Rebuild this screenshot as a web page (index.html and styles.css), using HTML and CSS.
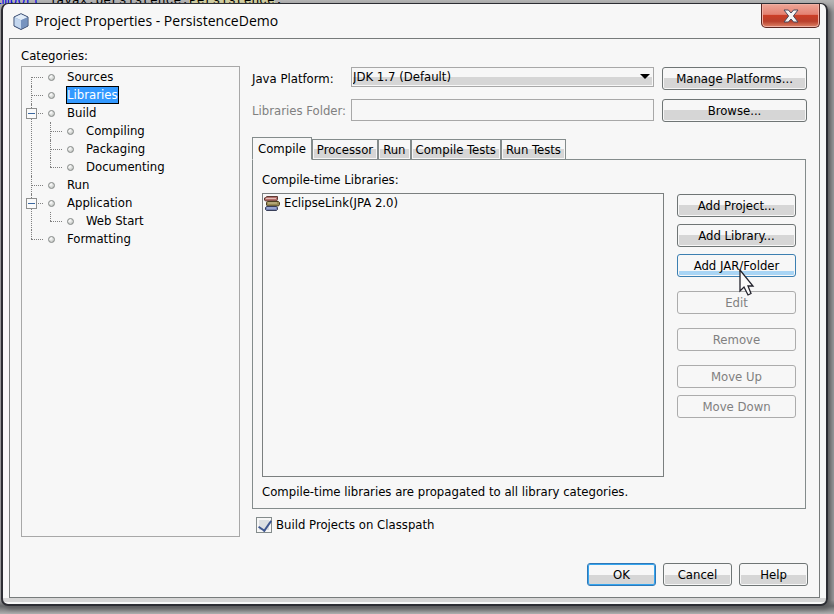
FILE: index.html
```
<!DOCTYPE html>
<html lang="en">
<head>
  <meta charset="UTF-8">
  <title>Project Properties - PersistenceDemo</title>
  <link rel="stylesheet" href="styles.css">
</head>
<body>
  <div class="editor-line"><span class="keyword">import</span> javax.persistence.<mark>Persistence</mark>;</div>

  <div class="window">
    <header class="titlebar">
      <svg class="app-icon" width="16" height="17" viewBox="0 0 16 17">
        <path d="M8 .7 15 4v9l-7 3.5L1 13V4z" fill="#8fa9cd" stroke="#34466b"/>
        <path d="M8 1.3 14.3 4.3 8 7.2 1.7 4.3z" fill="#e3edf8"/>
        <path d="M8 7.2 14.4 4.4v8.3L8 15.8z" fill="#7793bf"/>
        <path d="M1.6 4.5 8 7.3v8.5l-6.4-3.2z" fill="#c3d6ee"/>
      </svg>
      <h1>Project Properties - PersistenceDemo</h1>
      <button class="close" aria-label="Close">
        <svg width="16" height="14" viewBox="0 0 16 14">
          <path d="M1 1h4.4L8 4l2.6-3H15l-4.6 6 4.6 6h-4.4L8 10l-2.6 3H1l4.6-6z" fill="#f4f4f4" stroke="#4b4a5c"/>
        </svg>
      </button>
    </header>

    <main class="content">
      <div class="columns">
        <section class="categories">
          <h2>Categories:</h2>
          <div class="tree">
            <ul>
              <li><div class="node"><i class="bullet"></i><span>Sources</span></div></li>
              <li><div class="node selected"><i class="bullet"></i><span>Libraries</span></div></li>
              <li>
                <div class="node"><button class="toggle" aria-label="Collapse Build"></button><i class="bullet"></i><span>Build</span></div>
                <ul>
                  <li><div class="node"><i class="bullet"></i><span>Compiling</span></div></li>
                  <li><div class="node"><i class="bullet"></i><span>Packaging</span></div></li>
                  <li><div class="node"><i class="bullet"></i><span>Documenting</span></div></li>
                </ul>
              </li>
              <li><div class="node"><i class="bullet"></i><span>Run</span></div></li>
              <li>
                <div class="node"><button class="toggle" aria-label="Collapse Application"></button><i class="bullet"></i><span>Application</span></div>
                <ul>
                  <li><div class="node"><i class="bullet"></i><span>Web Start</span></div></li>
                </ul>
              </li>
              <li><div class="node"><i class="bullet"></i><span>Formatting</span></div></li>
            </ul>
          </div>
        </section>

        <section class="settings">
          <div class="form">
            <label for="platform">Java Platform:</label>
            <div class="select">
              <select id="platform"><option>JDK 1.7 (Default)</option></select>
              <svg width="10" height="5" viewBox="0 0 10 5"><path d="M0 0h10L5 5z"/></svg>
            </div>
            <button class="btn">Manage Platforms...</button>
            <label for="folder" class="muted">Libraries Folder:</label>
            <input id="folder" type="text" disabled>
            <button class="btn">Browse...</button>
          </div>

          <div class="tabs" role="tablist">
            <button class="tab active" role="tab" aria-selected="true">Compile</button>
            <button class="tab" role="tab">Processor</button>
            <button class="tab" role="tab">Run</button>
            <button class="tab" role="tab">Compile Tests</button>
            <button class="tab" role="tab">Run Tests</button>
          </div>

          <div class="tab-panel" role="tabpanel">
            <h2>Compile-time Libraries:</h2>
            <div class="libraries">
              <ul class="list">
                <li>
                  <svg width="16" height="15" viewBox="0 0 16 15">
                    <path d="M1.500 1.500 3 .5h10.500v3l-1 1.500h-11L.5 4V2z" fill="#b5706c" stroke="#5e3a34"/>
                    <path d="M2 2.500h10" stroke="#e2bdb6"/>
                    <path d="M3.500 5.500h11l1 1v2l-1 1.500h-11l-1-1V6.500z" fill="#978a56" stroke="#4d4022"/>
                    <path d="M4 7h9" stroke="#cfc496"/>
                    <path d="M2.500 10.500h10l1 1v2l-1 1h-10l-1-1v-2z" fill="#7482b4" stroke="#383e58"/>
                    <path d="M3 12h9" stroke="#bcc6ea"/>
                  </svg>
                  EclipseLink(JPA 2.0)
                </li>
              </ul>
              <div class="actions">
                <button class="btn">Add Project...</button>
                <button class="btn">Add Library...</button>
                <button class="btn hover">Add JAR/Folder
                  <svg class="cursor" width="16" height="28" viewBox="0 0 16 28">
                    <path d="M1 1v21l4-4 4 8 3-1.500-3-7.500h5z" fill="#fafafa" stroke="#22222c" stroke-width="1.300"/>
                  </svg>
                </button>
                <button class="btn spaced" disabled>Edit</button>
                <button class="btn spaced" disabled>Remove</button>
                <button class="btn spaced" disabled>Move Up</button>
                <button class="btn" disabled>Move Down</button>
              </div>
            </div>
            <p>Compile-time libraries are propagated to all library categories.</p>
          </div>

          <label class="check"><input type="checkbox" checked>Build Projects on Classpath</label>
        </section>
      </div>

      <footer class="buttons">
        <button class="btn default">OK</button>
        <button class="btn">Cancel</button>
        <button class="btn">Help</button>
      </footer>
    </main>
  </div>
</body>
</html>
```
FILE: styles.css
```
* { box-sizing: border-box; }
body {
  margin: 0;
  padding: 3px 6px 8px 1px;
  min-height: 100vh;
  display: flex;
  flex-direction: column;
  position: relative;
  background: linear-gradient(to bottom, #b4b4b4, #9a9a9c 12px, #9a9a9c 600px, #66686a 606px, #b0b0b0);
  color: #000;
  font: 13px/16px "DejaVu Sans Condensed", "DejaVu Sans", sans-serif;
  font-stretch: condensed;
}
h1, h2, p, ul { margin: 0; padding: 0; font-size: inherit; font-weight: normal; list-style: none; }
button, input, select { font: inherit; color: inherit; }

/* code showing above the dialog */
.editor-line {
  position: absolute;
  top: -7px;
  left: -6px;
  font: 13px/15px "Liberation Mono", monospace;
  white-space: pre;
}
.keyword { color: #0000e6; }
.editor-line mark { background: #d0cda0; }

.window {
  position: relative;
  flex: 1;
  display: flex;
  flex-direction: column;
  padding: 0 6px 6px;
  border: 2px solid #2c2d33;
  border-top-width: 1px;
  border-radius: 7px;
  background: linear-gradient(to top, #f7f7f7 2px, #d6d6d6 2px, #d6d6d6 6px, #f7f7f7 6px);
  box-shadow: 3px 3px 4px #5c5c5e;
}

.titlebar { display: flex; align-items: center; height: 34px; padding-left: 4px; }
.titlebar h1 { flex: 1; margin-left: 6px; font: 14px/20px "Open Sans", sans-serif; }
.close {
  align-self: flex-start;
  display: flex;
  align-items: center;
  justify-content: center;
  width: 59px;
  height: 24px;
  padding: 0;
  border: 1px solid #5b2823;
  border-top: 0;
  border-radius: 0 0 5px 5px;
  background: linear-gradient(#eea698, #e48272 45%, #cb3e26 50%, #b9402c 75%, #de8468);
  box-shadow: inset 0 0 0 1px #f0b0a4;
}

.content {
  flex: 1;
  display: flex;
  flex-direction: column;
  gap: 26px;
  padding: 9px 11px 11px;
  border: 1px solid #777b7b;
  background: #f7f7f7;
}
.columns { flex: 1; display: grid; grid-template-columns: 219px 1fr; gap: 12px; }
.categories { display: flex; flex-direction: column; gap: 2px; }
.tree { flex: 1; padding-top: 1px; border: 1px solid #a8a8a8; }

.tree li { position: relative; }
.tree ul ul { margin-left: 19px; }
.tree li::before {
  content: "";
  position: absolute;
  left: 9px;
  top: 0;
  bottom: 0;
  border-left: 1px dotted #808080;
}
.tree > ul > li:first-child::before { top: 9px; }
.tree li:last-child::before { bottom: auto; height: 9px; }
.node { position: relative; display: flex; align-items: center; height: 18px; padding-left: 26px; }
.node::before {
  content: "";
  position: absolute;
  left: 9px;
  top: 9px;
  width: 12px;
  border-top: 1px dotted #808080;
}
.node span { margin-left: 11px; border: 1px solid transparent; line-height: 16px; }
.selected span { border-color: #000; background: #3399ff; color: #fff; }
.bullet {
  width: 7px;
  height: 7px;
  border: 1px solid #858987;
  border-radius: 50%;
  background: radial-gradient(circle at 35% 30%, #fff, #b4b8b4);
}
.toggle {
  position: relative;
  width: 11px;
  height: 11px;
  margin: 0 11px 0 -22px;
  padding: 0;
  border: 1px solid #8e8f8f;
  background: linear-gradient(#3b679f, #3b679f) center / 7px 1px no-repeat #fafafa;
}

.settings { display: flex; flex-direction: column; padding: 19px 1px 0 0; }
.form { display: grid; grid-template-columns: 91px 1fr 145px; gap: 9px 8px; align-items: start; }
.form label { line-height: 23px; white-space: nowrap; }
.muted { color: #808080; }
.select { position: relative; }
.select select {
  display: block;
  width: 100%;
  height: 20px;
  padding: 0 1px;
  border: 1px solid #a8a8a8;
  border-radius: 0;
  appearance: none;
  background: linear-gradient(#f7f7f7 50%, #d6d6d6 50%);
  box-shadow: inset 0 0 0 1px #f7f7f7;
}
.select svg { position: absolute; right: 4px; top: 7px; }
.form input { width: 100%; height: 22px; border: 1px solid #a8a8a8; background: #f7f7f7; }

.btn {
  position: relative;
  height: 23px;
  padding: 0;
  border: 1px solid #6f7575;
  border-radius: 3px;
  background: linear-gradient(#f7f7f7 50%, #d6d6d6 50%);
  box-shadow: inset 0 0 0 1px #f7f7f7;
  line-height: 21px;
}
.btn:disabled { border-color: #acacac; background: #f7f7f7; color: #808080; }
.btn.hover { border-color: #3c7fb1; background: linear-gradient(#f7f7f7 78%, #a9d5f5 78%); }
.btn.default { border-color: #2f78b8; box-shadow: inset 0 0 0 1px #35a5ee; }
.cursor { position: absolute; left: 61px; top: 14px; z-index: 1; }

.tabs { display: flex; align-items: flex-end; margin: 15px 0 -1px; z-index: 1; }
.tab {
  height: 21px;
  padding: 0 4px;
  border: 1px solid #848c8c;
  background: linear-gradient(#f7f7f7 50%, #d6d6d6 50%);
  box-shadow: inset 0 0 0 1px #f7f7f7;
  white-space: nowrap;
}
.tab.active { height: 23px; padding: 0 5px; border-bottom-color: #f7f7f7; background: #f7f7f7; }

.tab-panel {
  flex: 1;
  display: flex;
  flex-direction: column;
  margin-right: 1px;
  padding: 12px 9px 8px;
  border: 1px solid #848c8c;
}
.libraries { flex: 1; display: flex; gap: 13px; margin: 5px 0 7px; }
.list { flex: 1; border: 1px solid #7b7f7f; }
.list li { display: flex; align-items: center; gap: 4px; height: 18px; padding-left: 1px; }
.actions { display: flex; flex-direction: column; gap: 7px; width: 119px; padding-top: 1px; }
.spaced { margin-top: 7px; }

.check { display: flex; align-items: center; gap: 4px; margin: 8px 0 4px 4px; }
.check input {
  width: 16px;
  height: 16px;
  margin: 0;
  appearance: none;
  border: 1px solid #848c8c;
  background: #dcdfe2;
  box-shadow: inset 0 0 0 2px #f7f7f7;
  position: relative;
}
.check input:checked::after {
  content: "";
  position: absolute;
  left: 4px;
  top: 0;
  width: 6px;
  height: 11px;
  border: solid #3f5790;
  border-width: 0 2px 2px 0;
  transform: rotate(35deg);
}

.buttons { display: flex; justify-content: flex-end; gap: 7px; }
.buttons .btn { width: 69px; }
```
